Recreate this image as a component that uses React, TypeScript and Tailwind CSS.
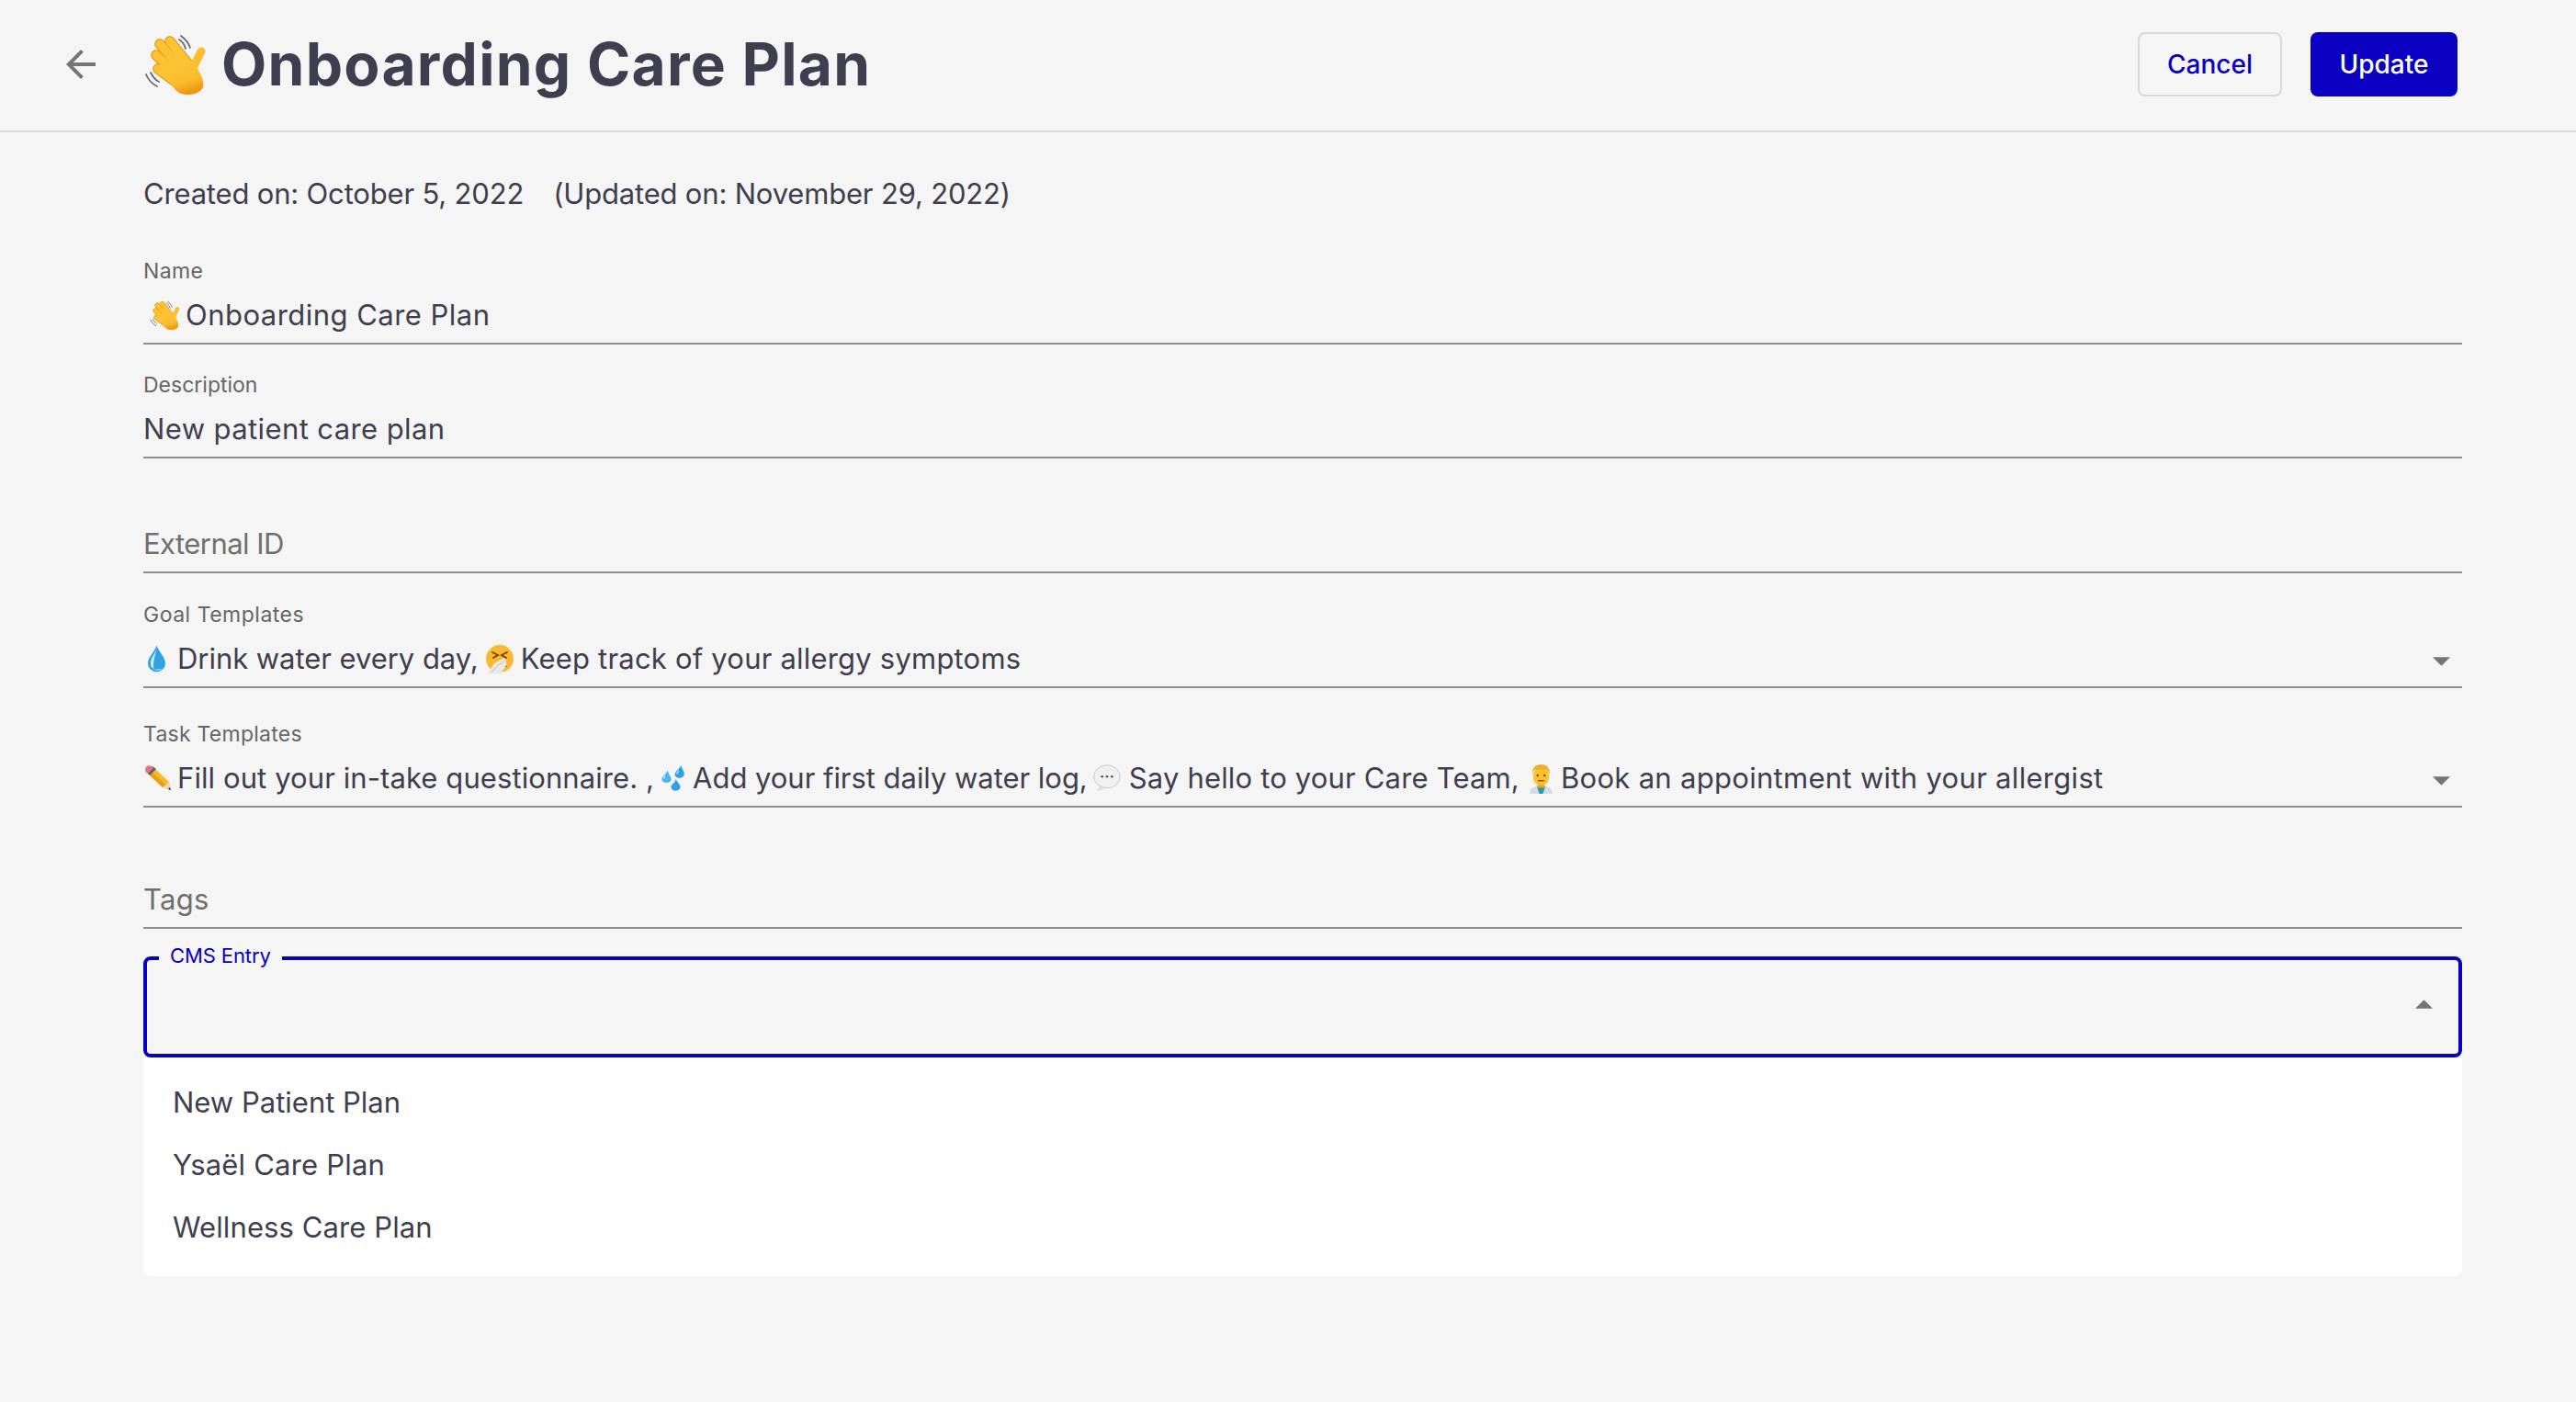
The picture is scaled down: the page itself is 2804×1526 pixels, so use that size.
import React from 'react';

const Wave = ({ className }: { className: string }) => (
  <svg viewBox="12 6 68 70" className={className}>
    <defs>
      <linearGradient id="hand" x1="0" y1="0" x2="0.3" y2="1">
        <stop offset="0" stopColor="#fcc63a" />
        <stop offset="0.7" stopColor="#fbbc2c" />
        <stop offset="1" stopColor="#ef9a16" />
      </linearGradient>
    </defs>
    <g fill="none" stroke="#6b6b6b" strokeWidth="1.8" strokeLinecap="round">
      <path d="M52 10c4 3 8 7 10 13" />
      <path d="M50 14c3 2 6 6 7 10" />
      <path d="M14 52c2 5 6 10 12 13" />
      <path d="M19 50c2 4 5 8 9 10" />
    </g>
    <g fill="none" strokeLinecap="round">
      <path d="M40 16l21 26M29 19l22 25M25 31l22 21M27 46l20 15" stroke="#dd9114" strokeWidth="11.5" />
      <path d="M40 16l21 26M29 19l22 25M25 31l22 21M27 46l20 15" stroke="#fcc232" strokeWidth="9.5" />
      <path d="M74 27l-8 16" stroke="#fbbf2e" strokeWidth="9" />
    </g>
    <path d="M38 58l17-22 13 6c5 9 10 17 8 24-3 7-14 10-24 7-5-2-10-8-14-15z" fill="url(#hand)" />
  </svg>
);

const Drop = () => (
  <svg viewBox="2 0 20 36" className="ml-[5px] h-[30px] w-[19px] shrink-0" preserveAspectRatio="none">
    <path d="M12 1C9 10 2 16 2 24a10 11 0 0 0 20 0C22 16 15 10 12 1z" fill="#2fa3e6" />
    <path d="M12 5c-2 7-7 12-7 19 0 3 1 6 4 7-2-6 1-16 3-26z" fill="#d3f0fc" />
    <path d="M8 32c3 2 8 2 11-1-3 0-7 1-11 1z" fill="#8fd4f6" />
  </svg>
);

const Sneeze = () => (
  <svg viewBox="13 3 32 33" className="h-[33px] w-[32px] shrink-0">
    <circle cx="28" cy="19" r="15" fill="#fbb92f" />
    <path d="M20 12l6 3-5 3M36 12l-6 3 5 3" stroke="#6b4110" strokeWidth="1.8" fill="none" strokeLinecap="round" />
    <path d="M30 27c2-1 4-1 5 0" stroke="#6b4110" strokeWidth="1.6" fill="none" strokeLinecap="round" />
    <path d="M14 36l8-12 11-6 3 7-7 10z" fill="#e9e9e6" />
    <path d="M19 34l7-8 7-4" stroke="#bdbdb8" strokeWidth="1" fill="none" />
  </svg>
);

const Pencil = () => (
  <svg viewBox="7 8 31 30" className="h-[30px] w-[31px] shrink-0">
    <path d="M14 20l6-7 15 14 2 9-9-3z" fill="#f8bb2a" />
    <path d="M14 20l3-3 15 13-4 3z" fill="#e8a015" />
    <path d="M11 17l6-7 4 3-7 7z" fill="#55606e" />
    <path d="M9 14c0-4 4-6 7-4l2 2-6 6-2-1z" fill="#e9707c" />
    <path d="M28 33l7-6 2 9z" fill="#f1d7ae" />
    <path d="M34 35l2-2 1 3z" fill="#2c2c2c" />
  </svg>
);

const Sweat = () => (
  <svg viewBox="0 0 36 36" className="h-[30px] w-[30px] shrink-0">
    <path d="M28 1c-1 5-9 8-8 13 1 5 10 5 12 0 1-4-3-8-4-13z" fill="#2f9fe8" />
    <path d="M10 7c1 5-8 8-7 13 1 5 10 5 12 1 1-4-4-9-5-14z" fill="#49b6f2" />
    <path d="M21 18c1 6-7 8-6 12 1 6 11 6 12 0 1-3-5-7-6-12z" fill="#2f9fe8" />
    <path d="M25 7c-1 2-3 3-3 5l2 1c0-2 1-3 1-6z" fill="#cdeefc" />
    <path d="M7 13c-1 2-2 3-2 5l2 1c0-2 0-3 0-6z" fill="#cdeefc" />
  </svg>
);

const Bubble = () => (
  <svg viewBox="0 0 36 36" className="h-[32px] w-[32px] shrink-0">
    <ellipse cx="18" cy="16" rx="16" ry="14" fill="#f0f0f1" stroke="#c4c4c4" strokeWidth="1" />
    <path d="M9 26c0 3-2 6-5 8 5 0 9-2 12-5z" fill="#dedede" />
    <circle cx="12" cy="16" r="1.5" fill="#555" />
    <circle cx="18" cy="16" r="1.5" fill="#555" />
    <circle cx="24" cy="16" r="1.5" fill="#555" />
  </svg>
);

const Doctor = () => (
  <svg viewBox="15 3 28 35" className="h-[33px] w-[27px] shrink-0">
    <path d="M16 38c0-6 4-9 13-9s13 3 13 9z" fill="#d5dbe0" />
    <path d="M24 29h10l-3 9h-4z" fill="#2c9aa8" />
    <rect x="25" y="24" width="8" height="7" fill="#f0a623" />
    <rect x="20" y="8" width="18" height="20" rx="8" fill="#fcc02e" />
    <path d="M19 16c-1-9 5-12 10-12s11 3 10 12c-1-3-2-5-4-6-4 1-9 1-13 0-2 1-2 3-3 6z" fill="#eeb02c" />
    <circle cx="25" cy="17" r="1.2" fill="#5a3a10" />
    <circle cx="33" cy="17" r="1.2" fill="#5a3a10" />
    <path d="M26 23h6" stroke="#8a5a14" strokeWidth="1.6" strokeLinecap="round" />
  </svg>
);

const Caret = ({ up }: { up?: boolean }) => (
  <svg viewBox="0 0 20 10" className={up ? 'h-[10px] w-[19px] shrink-0' : 'mt-[5px] h-[10px] w-[19px] shrink-0'}>
    <path d={up ? 'M0 10L10 0l10 10z' : 'M0 0l10 10L20 0z'} fill="#757575" />
  </svg>
);

function Field({ label, className, children, caret, labelClass = '' }: { label?: string; className: string; children: React.ReactNode; caret?: boolean; labelClass?: string }) {
  return (
    <div className={`border-b-2 border-[#8f8f8f] pb-[6px] ${className}`}>
      {label && <div className={`mb-[9px] h-[30px] text-[23px] leading-[30px] text-[#666666] ${labelClass}`}>{label}</div>}
      <div className="flex h-[48px] items-center justify-between pr-[13px] text-[31px] text-[#3f3e4e]">
        <div className="flex items-center">{children}</div>
        {caret && <Caret />}
      </div>
    </div>
  );
}

export default function App() {
  return (
    <div className="min-h-[1526px] bg-[#f5f5f5] font-['Inter','Liberation_Sans',sans-serif]">
      <header className="flex h-[144px] items-center justify-between border-b-2 border-[#d9d9d9] pb-[2px] pl-[64px] pr-[129px]">
        <div className="flex items-center">
          <svg viewBox="0 0 24 24" className="h-[48px] w-[48px]">
            <path d="M20 11H7.83l5.59-5.59L12 4l-8 8 8 8 1.41-1.41L7.83 13H20v-2z" fill="#757575" />
          </svg>
          <Wave className="ml-[45px] h-[70px] w-[68px]" />
          <h1 className="ml-[16px] text-[64px] font-bold leading-none tracking-[1.25px] text-[#3f3e4e]">Onboarding Care Plan</h1>
        </div>
        <div className="flex items-center gap-[31px]">
          <button className="h-[70px] w-[157px] rounded-[8px] border-2 border-[#d9d9d9] text-[28px] font-medium text-[#0a00c2]">Cancel</button>
          <button className="h-[70px] w-[160px] rounded-[8px] bg-[#0a00c2] text-[28px] font-medium text-white">Update</button>
        </div>
      </header>
      <main className="pl-[156px] pr-[124px]">
        <div className="mt-[43px] flex h-[48px] items-center gap-[32px] text-[31px] tracking-[-0.18px] text-[#3f3e4e]">
          <span>Created on: October 5, 2022</span>
          <span>(Updated on: November 29, 2022)</span>
        </div>
        <Field label="Name" labelClass="tracking-[0.4px]" className="mt-[45px]">
          <Wave className="ml-[7px] mr-[6px] h-[34px] w-[33px]" />
          <span className="tracking-[0.47px]">Onboarding Care Plan</span>
        </Field>
        <Field label="Description" className="mt-[29px]"><span className="tracking-[0.4px]">New patient care plan</span></Field>
        <Field className="mt-[69px]"><span className="tracking-[-0.55px] text-[#6f6f6f]">External ID</span></Field>
        <Field label="Goal Templates" labelClass="tracking-[0.5px]" className="mt-[30px]" caret>
          <Drop />
          <span className="ml-[13px] tracking-[-0.05px]">Drink water every day,</span>
          <span className="ml-[8px]"><Sneeze /></span>
          <span className="ml-[6px] tracking-[0.2px]">Keep track of your allergy symptoms</span>
        </Field>
        <Field label="Task Templates" labelClass="tracking-[0.25px]" className="mt-[35px]" caret>
          <Pencil />
          <span className="ml-[6px] tracking-[0.09px]">Fill out your in-take questionnaire. ,</span>
          <span className="ml-[6px]"><Sweat /></span>
          <span className="ml-[6px] tracking-[-0.04px]">Add your first daily water log,</span>
          <span className="ml-[5px]"><Bubble /></span>
          <span className="ml-[8px] tracking-[0.17px]">Say hello to your Care Team,</span>
          <span className="ml-[10px]"><Doctor /></span>
          <span className="ml-[8px] tracking-[0.3px]">Book an appointment with your allergist</span>
        </Field>
        <Field className="mt-[76px]"><span className="tracking-[0.3px] text-[#6f6f6f]">Tags</span></Field>
        <div className="relative mt-[30px] flex h-[110px] items-center justify-end rounded-[8px] border-4 border-[#0a00c2] pb-[6px] pr-[28px]">
          <span className="absolute left-[13px] top-[-18px] bg-[#f5f5f5] px-[12px] text-[22px] leading-[26px] tracking-[-0.1px] text-[#0a00c2]">CMS Entry</span>
          <Caret up />
        </div>
        <ul className="rounded-b-[8px] bg-white pb-[19px] pt-[15px] text-[31px] text-[#3f3e4e]">
          <li className="flex h-[68px] items-center px-[32px]">New Patient Plan</li>
          <li className="flex h-[68px] items-center px-[32px] tracking-[0.2px]">Ysaël Care Plan</li>
          <li className="flex h-[68px] items-center px-[32px] tracking-[0.1px]">Wellness Care Plan</li>
        </ul>
      </main>
    </div>
  );
}
